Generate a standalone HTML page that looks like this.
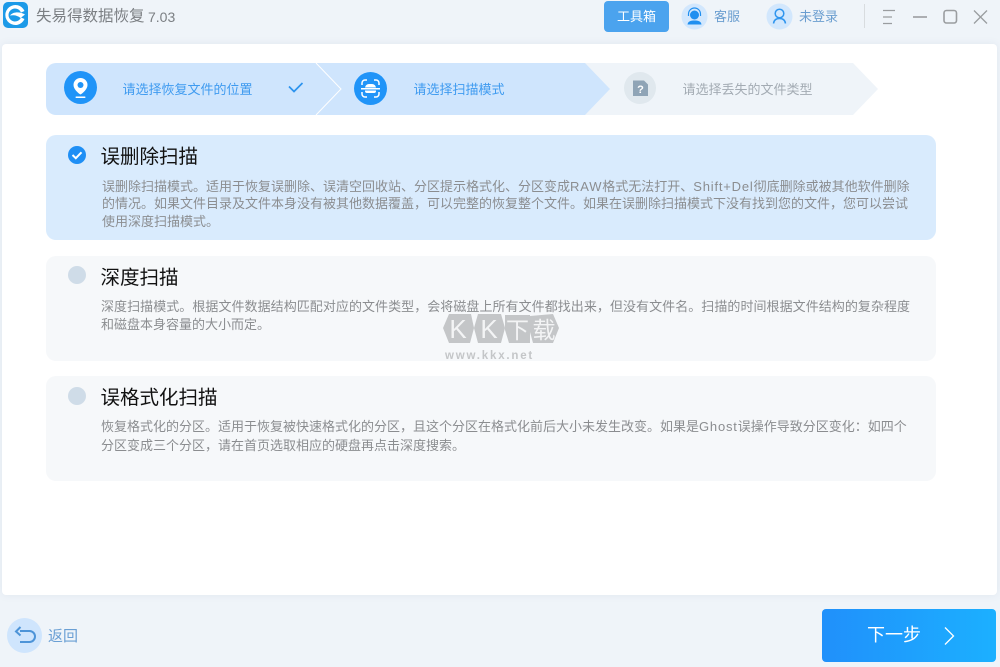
<!DOCTYPE html>
<html lang="zh"><head><meta charset="utf-8"><title>失易得数据恢复</title>
<style>
*{box-sizing:border-box;margin:0;padding:0}
html,body{width:1000px;height:667px;overflow:hidden}
body{background:#eff4f9;font-family:"Liberation Sans","Noto Sans CJK SC",sans-serif;position:relative}
.a{position:absolute;white-space:nowrap}
.main{left:2px;top:44px;width:995px;height:551px;background:#fff;border-radius:4px;box-shadow:0 0 8px rgba(120,140,170,.12)}
.card{left:46px;width:890px;height:105px;border-radius:10px;background:#f6f8fa}
.t{left:100.500px;font-size:19.500px;line-height:26px;color:#111}
.d{left:102px;font-size:13px;line-height:18px;color:#8b8d90}
.d i{font-style:normal;letter-spacing:.8px}
.s{font-size:13px;line-height:18px}
.r{left:68px;width:18px;height:18px;border-radius:50%;background:#cfdce8}
</style></head><body>
<svg class="a" style="left:3px;top:2px" width="25" height="26" viewBox="0 0 25 26"><rect width="25" height="26" rx="5" fill="#1c9ae8"/><path d="M21.500 9A10 10 0 1 0 21.500 17L18 15.500A6.500 6.500 0 1 1 18 10.500Z" fill="#fff"/><path d="M7 13.500C10 9.500 17 9.500 22 12.500L17.500 16C14 13 10 13 7 13.500Z" fill="#fff"/></svg>
<div class="a" style="left:36px;top:6px;font-size:15.500px;line-height:22px;color:#7b7f83">失易得数据恢复</div>
<div class="a" style="left:148px;top:7px;font-size:14px;line-height:20px;color:#7b7f83">7.03</div>

<div class="a" style="left:604px;top:1px;width:65px;height:31px;background:#4ba3ee;border-radius:4px;color:#fff;font-size:13px;line-height:31px;text-align:center">工具箱</div>
<svg class="a" style="left:681px;top:3px" width="27" height="27" viewBox="0 0 27 27"><circle cx="13.500" cy="13.500" r="13" fill="#d2e7fd"/><circle cx="13.500" cy="12" r="4.500" fill="#1f8ff0"/><path d="M7.500 13V11A6 6 0 0 1 19.500 11V13" fill="none" stroke="#1f8ff0" stroke-width="1.200"/><path d="M6.500 21.500C7 18 10 17.500 13.500 17.500S20 18 20.500 21.500Z" fill="#1f8ff0"/></svg>
<div class="a" style="left:714px;top:8px;font-size:13px;line-height:18px;color:#6b9ed0">客服</div>
<svg class="a" style="left:766px;top:3px" width="27" height="27" viewBox="0 0 27 27"><circle cx="13.500" cy="13.500" r="13" fill="#d2e7fd"/><circle cx="13.500" cy="10.500" r="4.300" fill="none" stroke="#2f95ee" stroke-width="1.500"/><path d="M7.500 20.500C8 16.800 10.500 15.500 13.500 15.500S19 16.800 19.500 20.500" fill="none" stroke="#2f95ee" stroke-width="1.500"/></svg>
<div class="a" style="left:799px;top:8px;font-size:13px;line-height:18px;color:#6b9ed0">未登录</div>
<div class="a" style="left:864px;top:4px;width:1px;height:24px;background:#d8dcdf"></div>
<svg class="a" style="left:880px;top:6px" width="110" height="22" viewBox="0 0 110 22" fill="none" stroke="#9a9da0" stroke-width="1.300"><path d="M3 4.500H15M3 11H12M3 17.500H12"/><path d="M33 11H47" stroke-width="1.600"/><rect x="64" y="4.500" width="12.500" height="12.500" rx="2.500" stroke-width="1.600"/><path d="M94 4.500L107 17.500M107 4.500L94 17.500"/></svg>

<div class="a main"></div>

<svg class="a" style="left:46px;top:63px" width="834" height="52" viewBox="0 0 834 52">
<path d="M807 0L832 26L807 52H530L555 26L530 0Z" fill="#eff4f9"/>
<path d="M10 0H539L564 26L539 52H10A10 10 0 0 1 0 42V10A10 10 0 0 1 10 0Z" fill="#cfe5fd"/>
<path d="M270 0L295 26L270 52" fill="none" stroke="#fff" stroke-width="1"/>
<path d="M243 23.500L248 28.500L256.500 20" fill="none" stroke="#2d93ee" stroke-width="1.700"/>
</svg>
<svg class="a" style="left:64px;top:71px" width="33" height="33" viewBox="0 0 33 33"><circle cx="16.500" cy="16.500" r="16.500" fill="#2094f8"/><path d="M16.500 7A7 7 0 0 0 9.500 14C9.500 18 14 22 16.500 23.500C19 22 23.500 18 23.500 14A7 7 0 0 0 16.500 7Z" fill="#fff"/><circle cx="16.500" cy="14" r="3" fill="#2094f8"/><rect x="11.500" y="25.500" width="10" height="1.500" rx=".7" fill="#fff"/></svg>
<div class="a s" style="left:122.500px;top:81px;color:#3f9bf0">请选择恢复文件的位置</div>
<svg class="a" style="left:354px;top:72px" width="33" height="33" viewBox="0 0 33 33"><circle cx="16.500" cy="16.500" r="16.500" fill="#2094f8"/><path d="M8 13V11A3 3 0 0 1 11 8H13M20 8H22A3 3 0 0 1 25 11V13M8 20V22A3 3 0 0 0 11 25H13M20 25H22A3 3 0 0 0 25 22V20" fill="none" stroke="#fff" stroke-width="1.500"/><path d="M11 15.500A4 4 0 0 1 15 12H18A4 4 0 0 1 22 15.500Z" fill="#fff"/><rect x="7" y="16" width="19" height="1.500" fill="#fff"/><path d="M11 18.500H22V19A2 2 0 0 1 20 21H13A2 2 0 0 1 11 19Z" fill="#fff"/></svg>
<div class="a s" style="left:413.500px;top:81px;color:#3f9bf0">请选择扫描模式</div>
<svg class="a" style="left:624px;top:72px" width="32" height="32" viewBox="0 0 32 32"><circle cx="16" cy="16" r="16" fill="#e0e8ee"/><path d="M9 8.500H20L24 12.500V24H9Z" fill="#8fa4b6"/><text x="16.500" y="21" font-size="11" font-weight="700" fill="#fff" text-anchor="middle" font-family="Liberation Sans">?</text></svg>
<div class="a s" style="left:682.500px;top:81px;color:#a3abb3">请选择丢失的文件类型</div>

<div class="a card" style="top:135px;background:#d9ebfd"></div>
<svg class="a" style="left:68px;top:146px" width="18" height="18" viewBox="0 0 18 18"><circle cx="9" cy="9" r="9" fill="#1f8ff5"/><path d="M4.500 9L7.800 12.200L13.500 6.300" fill="none" stroke="#fff" stroke-width="2"/></svg>
<div class="a t" style="top:144px">误删除扫描</div>
<div class="a d" style="top:178px">误删除扫描模式。适用于恢复误删除、误清空回收站、分区提示格式化、分区变成<i>RAW</i>格式无法打开、<i>Shift+Del</i>彻底删除或被其他软件删除</div>
<div class="a d" style="top:195px">的情况。如果文件目录及文件本身没有被其他数据覆盖，可以完整的恢复整个文件。如果在误删除扫描模式下没有找到您的文件，您可以尝试</div>
<div class="a d" style="top:213px">使用深度扫描模式。</div>

<div class="a card" style="top:256px"></div>
<div class="a r" style="top:266px"></div>
<div class="a t" style="top:265px">深度扫描</div>
<div class="a d" style="top:298px;left:101px;letter-spacing:.05px">深度扫描模式。根据文件数据结构匹配对应的文件类型，会将磁盘上所有文件都找出来，但没有文件名。扫描的时间根据文件结构的复杂程度</div>
<div class="a d" style="top:316px;left:101px">和磁盘本身容量的大小而定。</div>

<div class="a card" style="top:376px"></div>
<div class="a r" style="top:387px"></div>
<div class="a t" style="top:385px">误格式化扫描</div>
<div class="a d" style="top:418px;left:101px">恢复格式化的分区。适用于恢复被快速格式化的分区，且这个分区在格式化前后大小未发生改变。如果是<i>Ghost</i>误操作导致分区变化：如四个</div>
<div class="a d" style="top:437px;left:101px">分区变成三个分区，请在首页选取相应的硬盘再点击深度搜索。</div>

<svg class="a" style="left:443px;top:312px" width="118" height="34" viewBox="0 0 118 34">
<path d="M0 16L6 2H28L31 16L27 31H6Z" fill="#c4c6c8"/>
<path d="M31 16L35 2H58L62 16L58 31H35Z" fill="#c4c6c8"/>
<path d="M62 3H87V31H66L62 18Z" fill="#c4c6c8"/>
<path d="M87 4L110 2L116 16L110 31H90L87 20Z" fill="#c4c6c8"/>
<text x="15" y="26" font-size="26" text-anchor="middle" fill="#f3f4f5" font-family="Liberation Sans">K</text>
<text x="46" y="26" font-size="26" text-anchor="middle" fill="#f3f4f5" font-family="Liberation Sans">K</text>
<text x="74.500" y="26" font-size="23" text-anchor="middle" fill="#f3f4f5" font-family="Liberation Sans,Noto Sans CJK SC,sans-serif">下</text>
<text x="101" y="26" font-size="23" text-anchor="middle" fill="#f3f4f5" font-family="Liberation Sans,Noto Sans CJK SC,sans-serif">载</text>
</svg>
<div class="a" style="left:445px;top:349px;font-size:11.500px;line-height:14px;font-weight:700;color:#c4c6c8;letter-spacing:1.800px">www.kkx.net</div>

<svg class="a" style="left:7px;top:618px" width="35" height="35" viewBox="0 0 35 35"><circle cx="17.500" cy="17.500" r="17.500" fill="#cfe5fd"/><path d="M13 13H22.500A5 5 0 0 1 22.500 24H13M13.500 9L9 13.500L13.500 17.500" fill="none" stroke="#4d94d8" stroke-width="2"/></svg>
<div class="a" style="left:48px;top:627px;font-size:15px;line-height:20px;color:#6a9fd4">返回</div>

<div class="a" style="left:822px;top:609px;width:174px;height:53px;border-radius:4px;background:linear-gradient(90deg,#2090fb,#1cb0ff)"></div>
<div class="a" style="left:867px;top:623px;font-size:18px;line-height:25px;color:#fff">下一步</div>
<svg class="a" style="left:942px;top:626px" width="16" height="20" viewBox="0 0 16 20"><path d="M3 1.500L11.500 10L3 18.500" fill="none" stroke="#fff" stroke-width="1.300"/></svg>
</body></html>
